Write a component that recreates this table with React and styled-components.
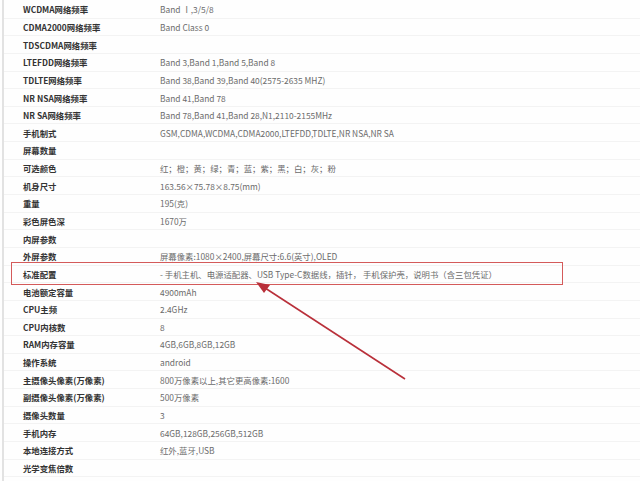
import React from 'react'
import styled, { createGlobalStyle } from 'styled-components'

const GlobalStyle = createGlobalStyle`
  html, body {
    margin: 0;
    padding: 0;
    background: #fff;
  }
  body {
    font-family: "Noto Sans CJK SC", "Noto Sans", sans-serif;
  }
`

const specs = [
  ['WCDMA网络频率', 'Band Ⅰ,3/5/8'],
  ['CDMA2000网络频率', 'Band Class 0'],
  ['TDSCDMA网络频率', ''],
  ['LTEFDD网络频率', 'Band 3,Band 1,Band 5,Band 8'],
  ['TDLTE网络频率', 'Band 38,Band 39,Band 40(2575-2635 MHZ)'],
  ['NR NSA网络频率', 'Band 41,Band 78'],
  ['NR SA网络频率', 'Band 78,Band 41,Band 28,N1,2110-2155MHz'],
  ['手机制式', 'GSM,CDMA,WCDMA,CDMA2000,LTEFDD,TDLTE,NR NSA,NR SA'],
  ['屏幕数量', ''],
  ['可选颜色', '红；橙；黄；绿；青；蓝；紫；黑；白；灰；粉'],
  ['机身尺寸', '163.56×75.78×8.75(mm)'],
  ['重量', '195(克)'],
  ['彩色屏色深', '1670万'],
  ['内屏参数', ''],
  ['外屏参数', '屏幕像素:1080×2400,屏幕尺寸:6.6(英寸),OLED'],
  ['标准配置', ' - 手机主机、电源适配器、USB Type-C数据线，插针， 手机保护壳，说明书（含三包凭证）', true],
  ['电池额定容量', '4900mAh'],
  ['CPU主频', '2.4GHz'],
  ['CPU内核数', '8'],
  ['RAM内存容量', '4GB,6GB,8GB,12GB'],
  ['操作系统', 'android'],
  ['主摄像头像素(万像素)', '800万像素以上,其它更高像素:1600'],
  ['副摄像头像素(万像素)', '500万像素'],
  ['摄像头数量', '3'],
  ['手机内存', '64GB,128GB,256GB,512GB'],
  ['本地连接方式', '红外,蓝牙,USB'],
  ['光学变焦倍数', ''],
]

function SpecSheet() {
  return (
    <Page>
      <Table>
        {specs.map(([label, value, marked]) => (
          <Row key={label}>
            <Label>{label}</Label>
            <Value>{value}</Value>
            {marked && <Highlight />}
          </Row>
        ))}
      </Table>
      <Arrow width="640" height="481" viewBox="0 0 640 481">
        <line x1="405" y1="379" x2="262" y2="286" stroke="#b9303a" strokeWidth="1.6" />
        <polygon points="256,282 270,285 264,293" fill="#b9303a" />
      </Arrow>
    </Page>
  )
}

const Page = styled.div`
  position: relative;
  width: 640px;
  height: 481px;
  overflow: hidden;
  background: #fefefe;
`

const Table = styled.div`
  display: flex;
  flex-direction: column;
  margin-left: 2px;
  padding-top: 1px;
  border-left: 2px solid #e2e2e2;
  height: 100%;
`

const Row = styled.div`
  position: relative;
  display: grid;
  grid-template-columns: 156px 1fr;
  align-items: center;
  height: 17.65px;
  box-sizing: border-box;
  border-bottom: 1px solid #f3f3f3;
  font-size: 8.4px;
  white-space: nowrap;
`

const Label = styled.div`
  padding-left: 19px;
  color: #333;
  font-weight: 600;
`

const Value = styled.div`
  color: #6b6b6b;
`

const Highlight = styled.div`
  position: absolute;
  left: 7px;
  top: -4px;
  width: 552px;
  height: 23px;
  border: 1.5px solid #d45a5a;
  box-sizing: border-box;
`

const Arrow = styled.svg`
  position: absolute;
  left: 0;
  top: 0;
  pointer-events: none;
`

export default function App() {
  return (
    <>
      <GlobalStyle />
      <SpecSheet />
    </>
  )
}
